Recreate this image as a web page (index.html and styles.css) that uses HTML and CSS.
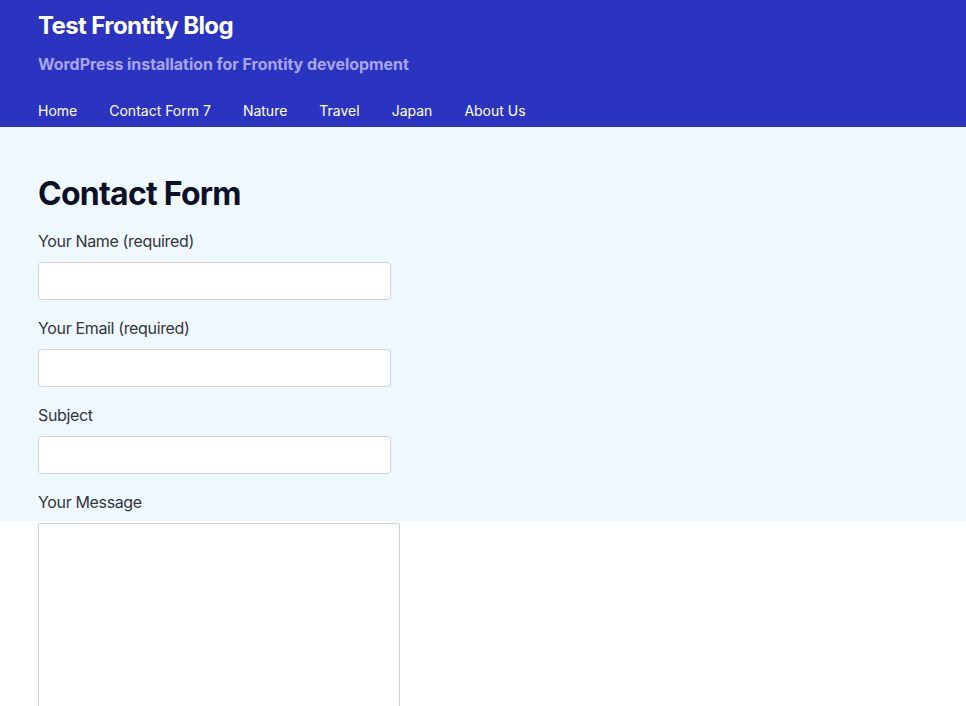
FILE: index.html
```html
<!DOCTYPE html>
<html lang="en">
<head>
    <meta charset="UTF-8">
    <meta name="viewport" content="width=device-width, initial-scale=1.0">
    <title>Contact Form - Test Frontity Blog</title>
    <link rel="stylesheet" href="styles.css">
</head>
<body>

    <header class="site-header">
        <h1 class="site-title">Test Frontity Blog</h1>
        <p class="site-description">WordPress installation for Frontity development</p>

        <!-- Main menu -->
        <nav class="site-nav">
            <a href="#">Home</a>
            <a href="#">Contact Form 7</a>
            <a href="#">Nature</a>
            <a href="#">Travel</a>
            <a href="#">Japan</a>
            <a href="#">About Us</a>
        </nav>
    </header>

    <main class="content">
        <h2 class="page-title">Contact Form</h2>

        <form class="contact-form">
            <label for="your-name">Your Name (required)</label>
            <input type="text" id="your-name" class="field">

            <label for="your-email">Your Email (required)</label>
            <input type="email" id="your-email" class="field">

            <label for="your-subject">Subject</label>
            <input type="text" id="your-subject" class="field">

            <label for="your-message">Your Message</label>
            <textarea id="your-message" class="field field-message"></textarea>
        </form>
    </main>

</body>
</html>
```

FILE: styles.css
```css
body {
    font-family: 'Inter', 'Noto Sans', sans-serif;
    margin: 0;
    color: #2d2f36;
    background: linear-gradient(#eff8fd 0, #eff8fd 521px, #fff 521px);
    background-repeat: no-repeat;
    min-height: 100vh;
}

.site-header {
    background-color: #2a34c0;
    padding: 8px 38px 4px;
}

.site-title {
    font-size: 24px;
    line-height: 36px;
    font-weight: 700;
    color: #fff;
    margin: 0;
    letter-spacing: -0.6px;
}

.site-description {
    font-size: 16px;
    line-height: 24px;
    font-weight: 700;
    color: #a6a7f2;
    margin: 8px 0 0;
    letter-spacing: -0.05px;
}

.site-nav {
    display: flex;
    gap: 32px;
    margin-top: 23px;
}

.site-nav a {
    color: #fff;
    text-decoration: none;
    font-size: 14px;
    line-height: 24px;
}

.content {
    padding: 47px 38px 0;
}

.page-title {
    font-size: 32px;
    line-height: 40px;
    font-weight: 700;
    color: #0c1127;
    margin: 0 0 15px;
    letter-spacing: -0.75px;
}

.contact-form {
    display: flex;
    flex-direction: column;
    align-items: flex-start;
}

.contact-form label {
    font-size: 16px;
    line-height: 24px;
    color: #33363d;
    margin-bottom: 9px;
    letter-spacing: -0.35px;
}

.field {
    box-sizing: border-box;
    width: 353px;
    height: 38px;
    border: 1px solid #cfd2d6;
    border-radius: 4px;
    background-color: #fff;
    margin: 0 0 16px;
    font-family: inherit;
    font-size: 16px;
}

.field-message {
    width: 362px;
    height: 240px;
    border-radius: 2px;
    resize: none;
}
```
